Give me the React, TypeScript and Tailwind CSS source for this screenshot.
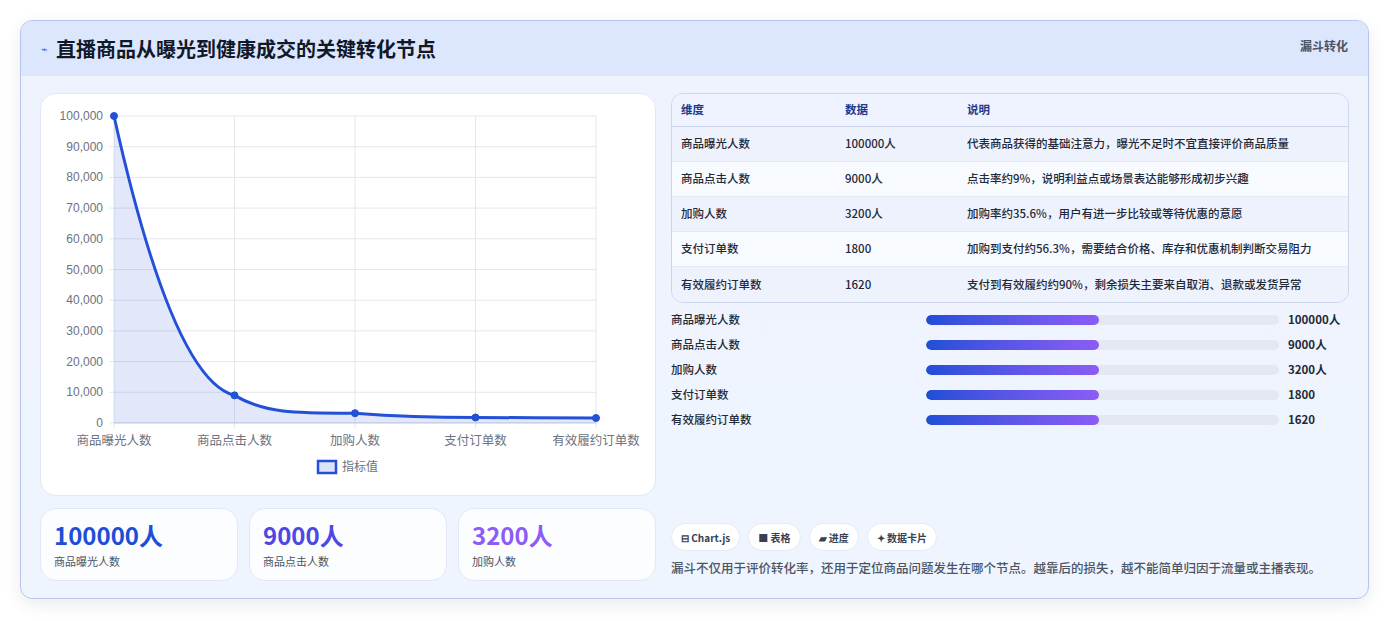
import React from "react";

const rows = [
  ["商品曝光人数", "100000人", "代表商品获得的基础注意力，曝光不足时不宜直接评价商品质量"],
  ["商品点击人数", "9000人", "点击率约9%，说明利益点或场景表达能够形成初步兴趣"],
  ["加购人数", "3200人", "加购率约35.6%，用户有进一步比较或等待优惠的意愿"],
  ["支付订单数", "1800", "加购到支付约56.3%，需要结合价格、库存和优惠机制判断交易阻力"],
  ["有效履约订单数", "1620", "支付到有效履约约90%，剩余损失主要来自取消、退款或发货异常"],
];

function Chart() {
  const x0 = 73, x1 = 555, y0 = 22, y1 = 329;
  const vals = [100000, 9000, 3200, 1800, 1620];
  const pts = vals.map((v, i) => [x0 + (i * (x1 - x0)) / 4, y1 - (v / 100000) * (y1 - y0)]);
  const d = `M${pts[0][0]},${pts[0][1]} C${pts[0][0] + 40},${pts[0][1] + 180} ${pts[1][0] - 40},${pts[1][1] - 10} ${pts[1][0]},${pts[1][1]} C${pts[1][0] + 30},${pts[1][1] + 18} ${pts[2][0] - 60},${pts[2][1]} ${pts[2][0]},${pts[2][1]} C${pts[2][0] + 40},${pts[2][1] + 3} ${pts[3][0] - 40},${pts[3][1]} ${pts[3][0]},${pts[3][1]} C${pts[3][0] + 40},${pts[3][1]} ${pts[4][0] - 40},${pts[4][1]} ${pts[4][0]},${pts[4][1]}`;
  const ticks = Array.from({ length: 11 }, (_, i) => i * 10000);
  return (
    <svg width="615" height="400" className="block" style={{ fontFamily: "'Liberation Sans', 'Noto Sans CJK SC', sans-serif" }}>
      {ticks.map((t) => {
        const y = y1 - (t / 100000) * (y1 - y0);
        return (
          <g key={t}>
            <line x1={x0 - 5} x2={x1} y1={y} y2={y} stroke="#e5e7eb" />
            <text x={62} y={y + 4} textAnchor="end" fontSize="12" fill="#6b7280">{t.toLocaleString("en-US")}</text>
          </g>
        );
      })}
      {pts.map((p, i) => (
        <line key={i} x1={p[0]} x2={p[0]} y1={y0} y2={y1 + 5} stroke="#e5e7eb" />
      ))}
      <line x1={x0} x2={x1} y1={y1} y2={y1} stroke="#cbd5e1" />
      <path d={`${d} L${x1},${y1} L${x0},${y1} Z`} fill="rgba(59,91,219,0.15)" />
      <path d={d} fill="none" stroke="#2250d6" strokeWidth="3" />
      {pts.map((p, i) => (
        <circle key={i} cx={p[0]} cy={p[1]} r="3.5" fill="#2250d6" stroke="#2250d6" />
      ))}
      {["商品曝光人数", "商品点击人数", "加购人数", "支付订单数", "有效履约订单数"].map((l, i) => (
        <text key={l} x={pts[i][0]} y={351} textAnchor="middle" fontSize="12.5" fill="#6b7280">{l}</text>
      ))}
      <rect x="277" y="367" width="18" height="12" fill="#dbe3f8" stroke="#2250d6" strokeWidth="2.5" />
      <text x="301" y="377" fontSize="12" fill="#6b7280">指标值</text>
    </svg>
  );
}

export default function App() {
  return (
    <div className="w-[1390px] h-[621px] bg-white pt-5 pl-5" style={{ fontFamily: "'Noto Sans CJK SC', 'Noto Sans', sans-serif" }}>
      <div className="w-[1349px] h-[579px] rounded-xl border border-[#b8c4ea] bg-gradient-to-b from-[#eef2fd] to-[#eff5ff] shadow-[0_6px_18px_rgba(0,0,0,0.08)] overflow-hidden flex flex-col">
        <div className="h-[55px] bg-[#dce6fd] flex items-start justify-between pl-5 pr-5 shrink-0">
          <div className="flex items-center gap-2 h-[55px]">
            <span className="text-[#3b5bdb] text-[11px]">⌁</span>
            <span className="text-[20px] font-bold text-[#111827]">直播商品从曝光到健康成交的关键转化节点</span>
          </div>
          <span className="text-[12px] font-bold text-[#4b5563] mt-[16px]">漏斗转化</span>
        </div>
        <div className="flex gap-[15px] px-[19px] pt-[17px]">
          <div className="w-[616px] flex flex-col gap-3">
            <div className="h-[403px] rounded-2xl bg-white border border-[#e3e8f5]">
              <Chart />
            </div>
            <div className="grid grid-cols-3 gap-[11px]">
              {[["100000人", "商品曝光人数", "text-[#1d4ed8]"], ["9000人", "商品点击人数", "text-[#4f46e5]"], ["3200人", "加购人数", "text-[#8b5cf6]"]].map(([v, l, c]) => (
                <div key={l} className="h-[73px] rounded-2xl bg-white/80 border border-[#e0e7f5] px-[13px] pt-[10px]">
                  <div className={`text-[24px] font-bold leading-[32px] ${c}`}>{v}</div>
                  <div className="text-[11px] text-[#4b5563] mt-[2px]">{l}</div>
                </div>
              ))}
            </div>
          </div>
          <div className="w-[681px] flex flex-col">
            <div className="rounded-xl border border-[#cdd5ea] overflow-hidden text-[11.5px] text-[#1f2937]">
              <div className="flex h-[33px] items-center bg-[#eef3ff] border-b border-[#cdd5ea] font-bold text-[#1e3a8a]">
                <div className="w-[173px] pl-[9px]">维度</div>
                <div className="w-[122px]">数据</div>
                <div>说明</div>
              </div>
              {rows.map((r, i) => (
                <div key={i} className={`flex h-[35px] items-center font-medium ${i % 2 === 0 ? "bg-[#eef2fd]" : "bg-[#f7faff]"} ${i < 4 ? "border-b border-[#e3e8f5]" : ""}`}>
                  <div className="w-[173px] pl-[9px]">{r[0]}</div>
                  <div className="w-[122px]">{r[1]}</div>
                  <div>{r[2]}</div>
                </div>
              ))}
            </div>
            <div className="mt-[8px] flex flex-col gap-[7px]">
              {rows.map((r) => (
                <div key={r[0]} className="flex items-center h-[18px] text-[11.5px] text-[#1f2937] font-medium">
                  <div className="w-[255px]">{r[0]}</div>
                  <div className="w-[353px] h-[10px] rounded-full bg-[#e3e8f2] overflow-hidden">
                    <div className="h-full w-[49%] rounded-full bg-gradient-to-r from-[#1d4ed8] to-[#8b5cf6]" />
                  </div>
                  <div className="ml-[9px] font-bold">{r[1]}</div>
                </div>
              ))}
            </div>
            <div className="flex gap-2 mt-[94px]">
              {["⊟ Chart.js", "■ 表格", "▰ 进度", "✦ 数据卡片"].map((t) => (
                <span key={t} className="h-[28px] px-[9px] rounded-full bg-white border border-[#e6eaf4] text-[10px] font-bold text-[#374151] flex items-center">{t}</span>
              ))}
            </div>
            <div className="mt-[8px] text-[12.5px] text-[#4b5563] font-medium">漏斗不仅用于评价转化率，还用于定位商品问题发生在哪个节点。越靠后的损失，越不能简单归因于流量或主播表现。</div>
          </div>
        </div>
      </div>
    </div>
  );
}
